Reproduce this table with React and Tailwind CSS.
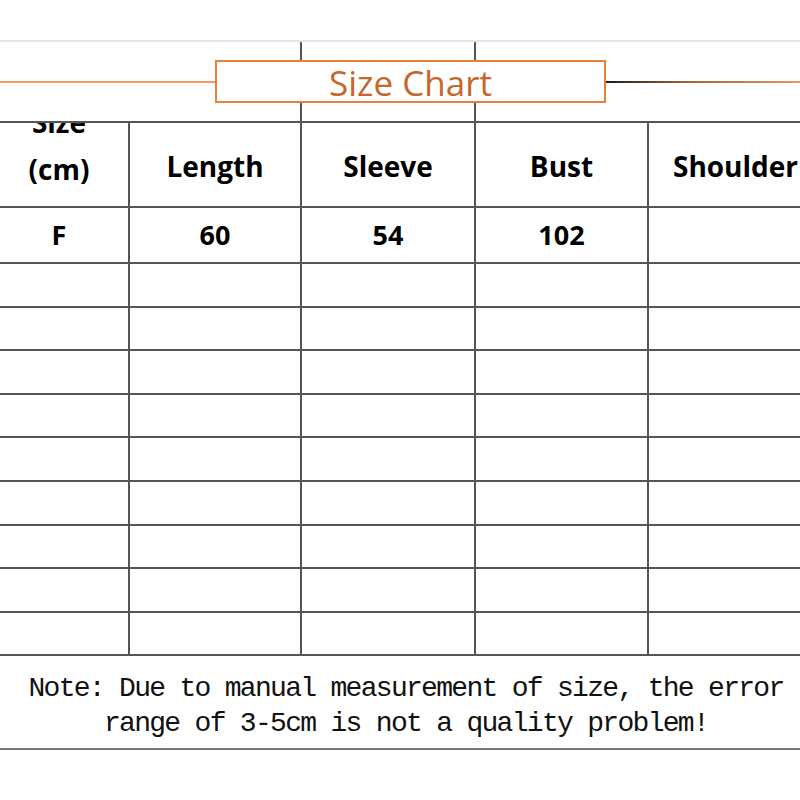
import React from "react"

const cols = "grid grid-cols-[140px_172px_174px_173px_173px]"
const line = "border-[#555]"

const head = ["Length", "Sleeve", "Bust", "Shoulder"]
const data = ["60", "54", "102", ""]

export default function App() {
  return (
    <div className="w-[800px] h-[800px] overflow-hidden bg-white">
      <div className="ml-[-10px] w-[832px]">
        <div className="h-[40px]" />

        {/* title band */}
        <div className="grid h-[81px] border-t-2 border-[#e6e6e6]">
          <div className={`${cols} col-start-1 row-start-1`}>
            <div />
            <div className={`border-r-2 ${line}`} />
            <div className={`border-r-2 ${line}`} />
            <div />
            <div />
          </div>
          <div className="col-start-1 row-start-1 flex items-center">
            <div className="w-[225px] h-[2px] bg-[#ee9a62]" />
            <div className="w-[391px] h-[43px] border-2 border-[#e8803a] bg-white flex items-center justify-center">
              <span className="font-['Open_Sans',sans-serif] text-[35px] leading-none text-[#c5662c] pt-[2px]">
                Size Chart
              </span>
            </div>
            <div className="flex-1 h-[2px] bg-linear-to-r from-[#1e1e1e] via-[#a8683a] via-40% to-[#f0a36e]" />
          </div>
        </div>

        {/* table */}
        <div className={`border-t-2 ${line} font-['Open_Sans',sans-serif] font-bold text-black`}>
          <div className={`${cols} h-[85px]`}>
            <div className={`border-r-2 border-b-2 ${line} overflow-hidden flex flex-col justify-end items-center pb-[13px] text-[28px] leading-[47px]`}>
              <div>Size</div>
              <div>(cm)</div>
            </div>
            {head.map((h, i) => (
              <div
                key={h}
                className={`${i < 3 ? "border-r-2" : ""} border-b-2 ${line} flex items-center justify-center pt-[3px] text-[28px] whitespace-nowrap`}
              >
                {h}
              </div>
            ))}
          </div>

          <div className={`${cols} h-[56px]`}>
            <div className={`border-r-2 border-b-2 ${line} flex items-center justify-center text-[27px]`}>F</div>
            {data.map((d, i) => (
              <div
                key={i}
                className={`${i < 3 ? "border-r-2" : ""} border-b-2 ${line} flex items-center justify-center text-[27px]`}
              >
                {d}
              </div>
            ))}
          </div>

          {Array.from({ length: 9 }).map((_, r) => (
            <div key={r} className={`${cols} h-[43.6px]`}>
              <div className={`border-r-2 border-b-2 ${line}`} />
              <div className={`border-r-2 border-b-2 ${line}`} />
              <div className={`border-r-2 border-b-2 ${line}`} />
              <div className={`border-r-2 border-b-2 ${line}`} />
              <div className={`border-b-2 ${line}`} />
            </div>
          ))}
        </div>

        {/* note */}
        <div className="h-[94px] border-b-2 border-[#777] pt-[15px] font-['Liberation_Mono',monospace] text-[28px] leading-[35px] tracking-[-1.7px] text-[#111] text-center whitespace-nowrap">
          <div>Note: Due to manual measurement of size, the error</div>
          <div>range of 3-5cm is not a quality problem!</div>
        </div>
      </div>
    </div>
  )
}
